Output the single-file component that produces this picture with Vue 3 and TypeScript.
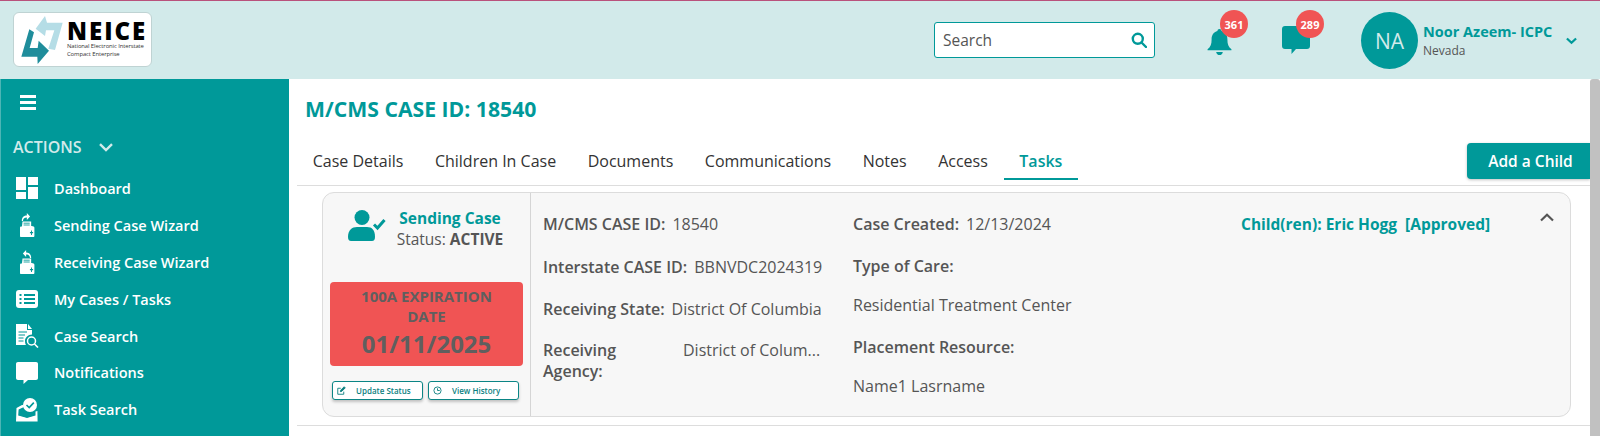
<script setup lang="ts">
const menu: { label: string; icon: string }[] = [
  { label: 'Dashboard', icon: 'dash' },
  { label: 'Sending Case Wizard', icon: 'send' },
  { label: 'Receiving Case Wizard', icon: 'recv' },
  { label: 'My Cases / Tasks', icon: 'list' },
  { label: 'Case Search', icon: 'search' },
  { label: 'Notifications', icon: 'chat' },
  { label: 'Task Search', icon: 'task' },
]
const tabs = ['Case Details', 'Children In Case', 'Documents', 'Communications', 'Notes', 'Access', 'Tasks']
</script>

<template>
  <div class="page">
    <header class="header">
      <div class="logo">
        <svg class="logo-mark" viewBox="60 45 135 150" width="45" height="50">
          <path d="M107 86 L135 48 L141 68 L188 68 L165 150 L145 146 L163 91 L138 91 L135 108 Z" fill="#b5dde6" />
          <path d="M88 88 L64 170 L112 170 L113 192 L147 152 L116 122 L113 144 L89 144 L102 97 Z" fill="#1f8d9b" />
        </svg>
        <div class="logo-text">
          <div class="logo-name">NEICE</div>
          <div class="logo-sub">National Electronic Interstate</div>
          <div class="logo-sub">Compact Enterprise</div>
        </div>
      </div>
      <div class="search">
        <span class="search-label">Search</span>
        <svg viewBox="0 0 16 16" width="16" height="16" fill="none" stroke="#009999" stroke-width="2.4">
          <circle cx="6.8" cy="6.8" r="5" />
          <path d="M10.5 10.5 L15 15" stroke-linecap="round" />
        </svg>
      </div>
      <div class="notice notice-bell">
        <svg viewBox="0 0 24 26" width="25" height="27" fill="#009999">
          <path d="M12 1 C13.2 1 14 1.8 14 3 C17.8 4 19.6 7 19.6 11 C19.6 15.5 20.6 18 23.5 20.5 L23.5 21.5 L0.5 21.5 L0.5 20.5 C3.4 18 4.4 15.5 4.4 11 C4.4 7 6.2 4 10 3 C10 1.8 10.8 1 12 1 Z" />
          <path d="M8.8 23 L15.2 23 C15 25 13.6 26 12 26 C10.4 26 9 25 8.8 23 Z" />
        </svg>
        <span class="badge">361</span>
      </div>
      <div class="notice notice-chat">
        <svg viewBox="0 0 28 28" width="28" height="28" fill="#009999">
          <path d="M3 0 L25 0 C26.8 0 28 1.2 28 3 L28 20 C28 21.8 26.8 23 25 23 L14 23 L9.5 28 L9.5 23 L3 23 C1.2 23 0 21.8 0 20 L0 3 C0 1.2 1.2 0 3 0 Z" />
        </svg>
        <span class="badge">289</span>
      </div>
      <div class="avatar">NA</div>
      <div class="user">
        <div class="user-name">Noor Azeem- ICPC</div>
        <div class="user-state">Nevada</div>
      </div>
      <svg class="user-chev" viewBox="0 0 12 8" width="11" height="8" fill="none" stroke="#009999" stroke-width="2.4">
        <path d="M1 1.2 L6 6 L11 1.2" />
      </svg>
    </header>

    <div class="body">
      <aside class="side">
        <div class="burger"><i></i><i></i><i></i></div>
        <div class="actions">
          <span>ACTIONS</span>
          <svg viewBox="0 0 14 9" width="14" height="9" fill="none" stroke="#d2eaea" stroke-width="2.4">
            <path d="M1 1.2 L7 7 L13 1.2" />
          </svg>
        </div>
        <nav class="menu">
          <div v-for="m in menu" :key="m.label" class="menu-item">
            <span class="menu-icon">
              <svg viewBox="0 0 24 24" width="24" height="24" fill="#fff">
                <template v-if="m.icon === 'dash'">
                  <rect x="1" y="1" width="10" height="13" />
                  <rect x="13" y="1" width="10" height="8" />
                  <rect x="1" y="16" width="10" height="7" />
                  <rect x="13" y="11" width="10" height="12" />
                </template>
                <g v-else-if="m.icon === 'send' || m.icon === 'recv'" transform="translate(3.2 0) scale(0.72 1)">
                  <path :d="m.icon === 'send' ? 'M5 8 C5 4 8 2.5 12 2.5 L12 0 L16.5 3.5 L12 7 L12 4.6 C9 4.6 7 5.5 6.6 8 Z' : 'M18 8 C18 4 15 2.5 11 2.5 L11 0 L6.5 3.5 L11 7 L11 4.6 C14 4.6 16 5.5 16.4 8 Z'" />
                  <path d="M6 8.5 L18 8.5 L18 13 L20 13 L20 15 L5 15 Z" />
                  <path d="M4 13.5 L21 13.5 C22 13.5 22.5 14 22.5 15 L22.5 23 C22.5 23.6 22 24 21.4 24 L4 24 C3 24 2.5 23.6 2.5 23 L2.5 15 C2.5 14 3 13.5 4 13.5 Z" />
                  <path d="M7.5 10.2 H16 M7.5 12 H16" stroke="#009999" stroke-width="1" />
                  <path d="M18.5 17.5 V22 M16.3 19.7 H20.7" stroke="#009999" stroke-width="1.3" />
                </g>
                <template v-else-if="m.icon === 'list'">
                  <rect x="1" y="3" width="22" height="18" rx="3" />
                  <path d="M9 8 H20 M9 12 H20 M9 16 H20" stroke="#009999" stroke-width="1.8" />
                  <path d="M4.5 8 H6.5 M4.5 12 H6.5 M4.5 16 H6.5" stroke="#009999" stroke-width="2" />
                </template>
                <template v-else-if="m.icon === 'search'">
                  <path d="M1 0 L12 0 L12 6 L17 6 L17 10.5 C13 10.5 10 13.5 10 17 C10 18.5 10.4 20 11 21 L1 21 Z" />
                  <path d="M13 0 L17 5 L13 5 Z" />
                  <path d="M3.5 8 H12 M3.5 11 H10 M3.5 14 H8.5 M3.5 17 H8.5" stroke="#009999" stroke-width="1" />
                  <circle cx="16.5" cy="17" r="4" fill="none" stroke="#fff" stroke-width="1.5" />
                  <path d="M19.5 20 L23 23.5" stroke="#fff" stroke-width="1.6" />
                </template>
                <template v-else-if="m.icon === 'chat'">
                  <path d="M3 1 L21 1 C22.3 1 23 1.8 23 3 L23 17 C23 18.2 22.3 19 21 19 L13 19 L8.5 23 L8.5 19 L3 19 C1.8 19 1 18.2 1 17 L1 3 C1 1.8 1.8 1 3 1 Z" />
                </template>
                <template v-else>
                  <circle cx="15" cy="7" r="7" />
                  <path d="M11.5 7 L14.2 9.6 L18.8 4.6" fill="none" stroke="#009999" stroke-width="1.6" />
                  <path d="M7 7 L8.5 7 L9 9 L3.6 11.5 L3.2 17.5 L12 20 L20.5 17.5 L20.5 13.5 L22.4 13 L22.6 23.5 L1 23.5 L1.5 10 Z" />
                  <path d="M3.5 18 L12 20.5 L20.5 18 L20.5 19 L12 22 L3.5 19 Z" />
                </template>
              </svg>
            </span>
            <span>{{ m.label }}</span>
          </div>
        </nav>
      </aside>

      <main class="main">
        <h1 class="title">M/CMS CASE ID: 18540</h1>
        <div class="tabbar">
          <span v-for="t in tabs" :key="t" class="tab" :class="{ active: t === 'Tasks' }">{{ t }}</span>
          <button class="add">Add a Child</button>
        </div>
        <section class="card">
          <div class="left">
            <div class="case-head">
              <svg viewBox="0 0 38 31" width="38" height="31" fill="#009999">
                <circle cx="14" cy="7.5" r="7.5" />
                <path d="M0 27 C0 20 4 17 9 17 L19 17 C24 17 27 20 27 27 C27 29.5 26 31 24 31 L3 31 C1 31 0 29.5 0 27 Z" />
                <path d="M26 14.5 L29.5 18 L36.5 10" fill="none" stroke="#009999" stroke-width="3" />
              </svg>
              <div class="case-text">
                <div class="case-type">Sending Case</div>
                <div class="case-status">Status: <b>ACTIVE</b></div>
              </div>
            </div>
            <div class="expire">
              <div class="expire-label">100A EXPIRATION DATE</div>
              <div class="expire-date">01/11/2025</div>
            </div>
            <div class="btns">
              <button class="mini">
                <svg viewBox="0 0 12 12" width="9" height="9" fill="none" stroke="#0b7f7f" stroke-width="1.2">
                  <path d="M9 7.5 V11 H1 V3 H5" />
                  <path d="M4.5 7.5 L5 5.5 L9.5 1 L11 2.5 L6.5 7 Z" fill="#0b7f7f" />
                </svg>
                <span>Update Status</span>
              </button>
              <button class="mini">
                <svg viewBox="0 0 12 12" width="9" height="9" fill="none" stroke="#0b7f7f" stroke-width="1.2">
                  <circle cx="6" cy="6" r="4.8" />
                  <path d="M6 3 V6 H9" />
                </svg>
                <span>View History</span>
              </button>
            </div>
          </div>
          <div class="details">
            <div class="col col-a">
              <div class="row r1"><b>M/CMS CASE ID:</b><span>18540</span></div>
              <div class="row r2"><b>Interstate CASE ID:</b><span>BBNVDC2024319</span></div>
              <div class="row r3"><b>Receiving State:</b><span>District Of Columbia</span></div>
              <div class="row r4"><b class="agency">Receiving Agency:</b><span class="agency-val">District of Colum...</span></div>
            </div>
            <div class="col col-b">
              <div class="row r1"><b>Case Created:</b><span>12/13/2024</span></div>
              <div class="row r2"><b>Type of Care:</b></div>
              <div class="row r5"><span>Residential Treatment Center</span></div>
              <div class="row r6"><b>Placement Resource:</b></div>
              <div class="row r7"><span>Name1 Lasrname</span></div>
            </div>
            <div class="children"><span>Child(ren): Eric Hogg</span><span>[Approved]</span></div>
            <svg class="collapse" viewBox="0 0 14 9" width="14" height="9" fill="none" stroke="#555" stroke-width="2.2">
              <path d="M1 7.5 L7 1.8 L13 7.5" />
            </svg>
          </div>
        </section>
        <div class="bottom-rule"></div>
      </main>
      <div class="scrollbar"></div>
    </div>
  </div>
</template>

<style>
html, body { margin: 0; padding: 0; overflow: hidden; background: #fff; }
</style>

<style scoped>
.page {
  width: 1600px;
  height: 436px;
  overflow: hidden;
  font-family: "Open Sans", "Noto Sans", sans-serif;
  display: flex;
  flex-direction: column;
  color: #555;
}
.header {
  height: 78px;
  flex: none;
  background: #d2eaea;
  border-top: 1px solid #b9527c;
  display: flex;
  align-items: flex-start;
  box-sizing: content-box;
}
.logo {
  width: 139px;
  height: 55px;
  box-sizing: border-box;
  margin: 11px 0 0 13px;
  background: #fff;
  border: 1px solid #bfd3d3;
  border-radius: 6px;
  display: flex;
}
.logo-mark { margin: 2px 0 0 6px; flex: none; }
.logo-text { margin-left: 2px; padding-top: 8px; }
.logo-name {
  font-weight: 800;
  font-size: 24px;
  line-height: 20px;
  letter-spacing: 2px;
  color: #000;
  height: 20px;
}
.logo-sub { font-size: 5.9px; line-height: 7.6px; color: #333; white-space: nowrap; letter-spacing: -0.1px; }
.logo-name + .logo-sub { margin-top: 2px; }
.search {
  width: 221px;
  height: 36px;
  box-sizing: border-box;
  margin: 21px 0 0 782px;
  background: #fff;
  border: 1px solid #009999;
  border-radius: 3px;
  display: flex;
  align-items: center;
  justify-content: space-between;
  padding: 0 7px 0 8px;
  flex: none;
}
.search-label { font-size: 15.5px; color: #555; }
.notice { position: relative; flex: none; }
.notice-bell { width: 25px; height: 27px; margin: 27px 0 0 52px; }
.notice-chat { width: 28px; height: 28px; margin: 25px 0 0 50px; }
.notice svg { display: block; }
.badge {
  position: absolute;
  top: -18px;
  width: 28px;
  height: 28px;
  border-radius: 50%;
  background: #f05454;
  color: #fff;
  font-size: 11px;
  font-weight: 700;
  display: flex;
  align-items: center;
  justify-content: center;
}
.notice-bell .badge { left: 13px; top: -18px; }
.notice-chat .badge { left: 14px; top: -16px; }
.avatar {
  width: 57px;
  height: 57px;
  border-radius: 50%;
  background: #009999;
  color: #d2eaea;
  font-size: 21px;
  display: flex;
  align-items: center;
  justify-content: center;
  margin: 11px 0 0 51px;
  flex: none;
}
.user { margin: 21px 0 0 5px; width: 143px; flex: none; }
.user-name { color: #009999; font-size: 14.5px; font-weight: 700; line-height: 20px; white-space: nowrap; }
.user-state { font-size: 12px; line-height: 17px; color: #555; }
.user-chev { margin: 36px 0 0 0; flex: none; }

.body { flex: 1; display: flex; min-height: 0; }
.side {
  width: 289px;
  flex: none;
  box-sizing: border-box;
  background: #009999;
  border-left: 1px solid #4db5b5;
  color: #fff;
}
.burger { margin: 16px 0 0 19px; width: 16px; display: flex; flex-direction: column; gap: 3px; }
.burger i { display: block; height: 3px; background: #fff; }
.actions {
  margin: 26px 0 0 12px;
  display: flex;
  align-items: center;
  gap: 17px;
  height: 22px;
  font-size: 16px;
  font-weight: 600;
  color: #d2eaea;
}
.menu { margin-top: 12px; display: flex; flex-direction: column; }
.menu-item {
  height: 36.9px;
  display: flex;
  align-items: center;
  font-size: 14.5px;
  font-weight: 600;
  padding-left: 14px;
}
.menu-icon { width: 39px; height: 24px; flex: none; display: block; }
.menu-icon svg { display: block; }

.main { flex: 1; min-width: 0; padding-left: 8px; }
.title {
  margin: 18px 0 0 8px;
  font-size: 21.2px;
  line-height: 24px;
  font-weight: 700;
  color: #009999;
}
.tabbar {
  margin-top: 22px;
  height: 43px;
  box-sizing: border-box;
  border-bottom: 1px solid #ddd;
  display: flex;
  align-items: flex-start;
}
.tab {
  font-size: 16px;
  line-height: 20px;
  padding: 8px 15.75px 7px;
  color: #333;
  white-space: nowrap;
  border-bottom: 2px solid transparent;
}
.tab.active { color: #009999; font-weight: 600; border-bottom-color: #009999; }
.add {
  margin-left: auto;
  width: 123px;
  height: 36px;
  border: 0;
  border-radius: 4px 0 0 4px;
  background: #009999;
  color: #fff;
  font-family: inherit;
  font-size: 15.5px;
  font-weight: 600;
  box-shadow: 0 1px 3px rgba(0, 0, 0, 0.25);
  padding: 0 0 0 4px;
}
.card {
  margin: 6px 0 0 25px;
  width: 1249px;
  height: 225px;
  box-sizing: border-box;
  background: #f7f7f7;
  border: 1px solid #dcdcdc;
  border-radius: 12px;
  display: flex;
}
.left {
  width: 208px;
  flex: none;
  box-sizing: border-box;
  border-right: 1px solid #d5d5d5;
  padding: 0 7px;
}
.case-head { display: flex; margin: 17px 0 0 18px; }
.case-text { margin-left: 5px; width: 118px; text-align: center; margin-top: -3px; }
.case-type { color: #009999; font-size: 15.5px; font-weight: 700; line-height: 22px; white-space: nowrap; }
.case-status { font-size: 15.5px; line-height: 21px; white-space: nowrap; }
.case-status b { font-weight: 700; }
.expire {
  margin-top: 32px;
  height: 84px;
  background: #f05454;
  border-radius: 4px;
  text-align: center;
  color: #5f5f5f;
  padding: 4px 20px 0;
  box-sizing: border-box;
}
.expire-label { font-size: 15px; font-weight: 700; line-height: 20px; }
.expire-date { font-size: 24px; font-weight: 700; line-height: 30px; margin: 3px -10px 0; white-space: nowrap; }
.btns { display: flex; gap: 5px; margin: 15px 2px 0; }
.mini {
  width: 91px;
  height: 19px;
  box-sizing: border-box;
  padding: 0 0 0 4px;
  background: #fff;
  border: 1px solid #0b8585;
  border-radius: 3px;
  box-shadow: 0 2px 3px rgba(0, 0, 0, 0.22);
  color: #0b7f7f;
  font-family: inherit;
  font-size: 8px;
  font-weight: 600;
  display: flex;
  align-items: center;
  justify-content: flex-start;
}
.mini span { margin-left: 10px; white-space: nowrap; }
.details { flex: 1; position: relative; display: flex; padding-left: 12px; font-size: 16px; }
.col { flex: none; }
.col-a { width: 310px; }
.col-b { width: 388px; }
.row { display: flex; gap: 7px; white-space: nowrap; line-height: 20px; }
.row b { font-weight: 600; font-size: 16px; }
.r1 { margin-top: 21px; }
.r2 { margin-top: 22px; }
.r3 { margin-top: 22px; }
.r4 { margin-top: 21px; }
.col-a .r2 { margin-top: 23px; }
.r5 { margin-top: 19px; }
.r6 { margin-top: 22px; }
.r7 { margin-top: 19px; }
.row b.agency { width: 120px; white-space: normal; line-height: 21px; flex: none; }
.agency-val { margin-left: 13px; }
.children {
  margin-top: 21px;
  display: flex;
  gap: 8px;
  color: #009999;
  font-size: 15.5px;
  font-weight: 700;
  line-height: 20px;
  height: 20px;
  white-space: nowrap;
}
.collapse { position: absolute; top: 20px; right: 16px; }
.bottom-rule { height: 1px; background: #ddd; margin-top: 8px; }
.scrollbar { width: 10px; flex: none; background: #c1c1c1; border-radius: 3px 3px 0 0; }
</style>
